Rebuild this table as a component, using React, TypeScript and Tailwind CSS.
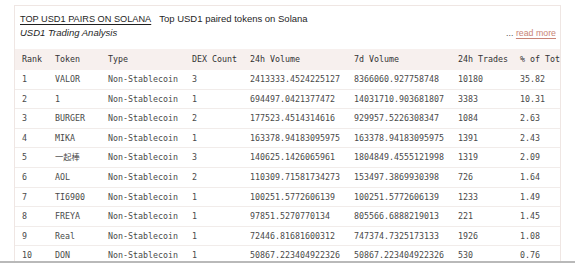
import React from "react";

type Pair = {
  rank: number;
  token: string;
  type: string;
  dexCount: number;
  volume24h: string;
  volume7d: string;
  trades24h: number;
  share: string;
};

const pairs: Pair[] = [
  { rank: 1, token: "VALOR", type: "Non-Stablecoin", dexCount: 3, volume24h: "2413333.4524225127", volume7d: "8366060.927758748", trades24h: 10180, share: "35.82" },
  { rank: 2, token: "1", type: "Non-Stablecoin", dexCount: 1, volume24h: "694497.0421377472", volume7d: "14031710.903681807", trades24h: 3383, share: "10.31" },
  { rank: 3, token: "BURGER", type: "Non-Stablecoin", dexCount: 2, volume24h: "177523.4514314616", volume7d: "929957.5226308347", trades24h: 1084, share: "2.63" },
  { rank: 4, token: "MIKA", type: "Non-Stablecoin", dexCount: 1, volume24h: "163378.94183095975", volume7d: "163378.94183095975", trades24h: 1391, share: "2.43" },
  { rank: 5, token: "一起棒", type: "Non-Stablecoin", dexCount: 3, volume24h: "140625.1426065961", volume7d: "1804849.4555121998", trades24h: 1319, share: "2.09" },
  { rank: 6, token: "AOL", type: "Non-Stablecoin", dexCount: 2, volume24h: "110309.71581734273", volume7d: "153497.3869930398", trades24h: 726, share: "1.64" },
  { rank: 7, token: "TI6900", type: "Non-Stablecoin", dexCount: 1, volume24h: "100251.5772606139", volume7d: "100251.5772606139", trades24h: 1233, share: "1.49" },
  { rank: 8, token: "FREYA", type: "Non-Stablecoin", dexCount: 1, volume24h: "97851.5270770134", volume7d: "805566.6888219013", trades24h: 221, share: "1.45" },
  { rank: 9, token: "Real", type: "Non-Stablecoin", dexCount: 1, volume24h: "72446.81681600312", volume7d: "747374.7325173133", trades24h: 1926, share: "1.08" },
  { rank: 10, token: "DON", type: "Non-Stablecoin", dexCount: 1, volume24h: "50867.223404922326", volume7d: "50867.223404922326", trades24h: 530, share: "0.76" },
];

const cols = "grid grid-cols-[33px_53px_84px_58px_104px_104px_62px_80px] pl-[7px]";

export default function App() {
  return (
    <div className="min-h-screen bg-white px-[14px] pt-[5px] font-['Liberation_Sans',Arial,sans-serif]">
      <div className="overflow-hidden border border-[#efe6e3] bg-white">
        <div className="pl-[5px] pr-[4px] pt-[6px] text-[9.5px] leading-[14px] text-[#1f1f1f]">
          <div className="flex items-baseline gap-[8px]">
            <span className="underline underline-offset-[2px] text-[9.2px]">TOP USD1 PAIRS ON SOLANA</span>
            <span>Top USD1 paired tokens on Solana</span>
          </div>
          <div className="flex items-baseline justify-between">
            <span className="italic">USD1 Trading Analysis</span>
            <span className="text-[8.8px] text-[#555]">
              ...{" "}
              <a className="text-[#c98476] underline underline-offset-[2px]">read more</a>
            </span>
          </div>
        </div>

        <div className="mt-[9px] w-[600px] font-['DejaVu_Sans_Mono','Liberation_Mono',monospace] text-[8.3px] text-[#4a4a4a]">
          <div className={`${cols} h-[21px] items-center bg-[#f7f0ee] text-[#333]`}>
            <span>Rank</span>
            <span>Token</span>
            <span>Type</span>
            <span>DEX Count</span>
            <span>24h Volume</span>
            <span>7d Volume</span>
            <span>24h Trades</span>
            <span className="whitespace-nowrap">% of Total</span>
          </div>
          {pairs.map((p) => (
            <div key={p.rank} className={`${cols} h-[19.6px] items-center border-b border-[#f1ecea]`}>
              <span>{p.rank}</span>
              <span className="font-['DejaVu_Sans_Mono','Noto_Sans_CJK_SC',monospace]">{p.token}</span>
              <span>{p.type}</span>
              <span>{p.dexCount}</span>
              <span>{p.volume24h}</span>
              <span>{p.volume7d}</span>
              <span>{p.trades24h}</span>
              <span>{p.share}</span>
            </div>
          ))}
        </div>
      </div>
      <div className="fixed inset-x-0 bottom-0 h-[2px] bg-[#b9b9b9]" />
    </div>
  );
}
